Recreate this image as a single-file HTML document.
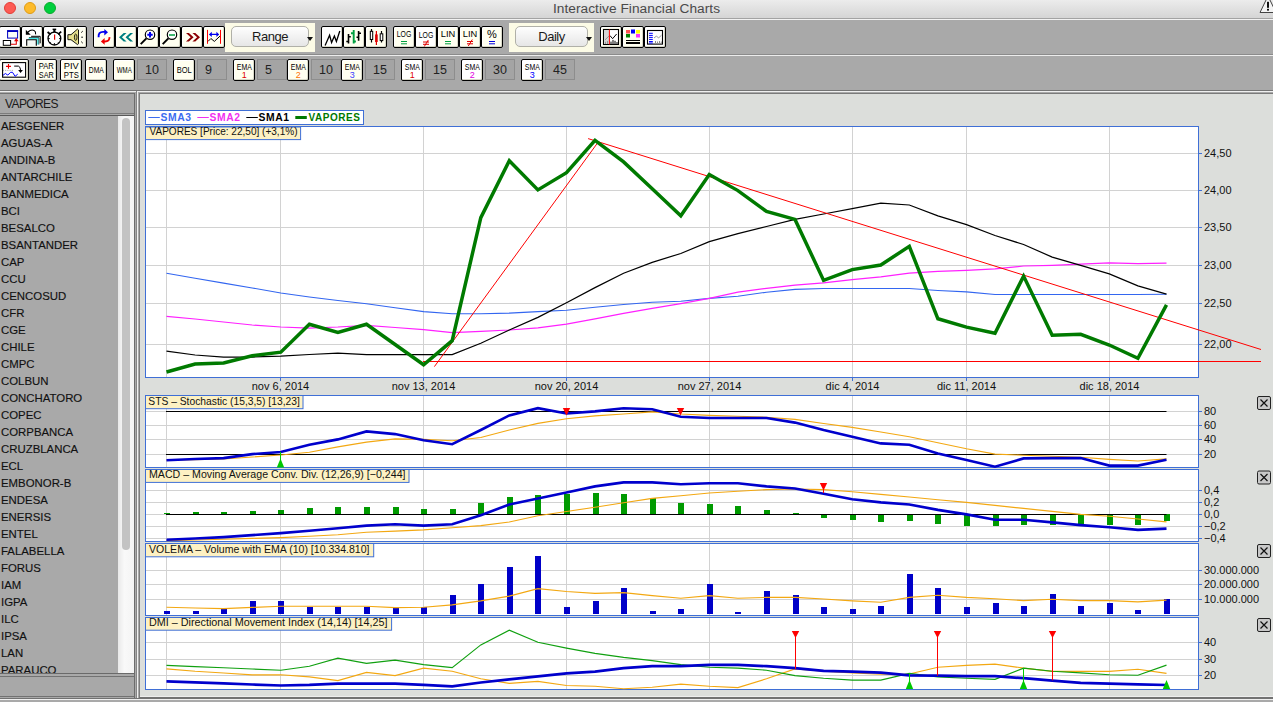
<!DOCTYPE html>
<html><head><meta charset="utf-8">
<style>
*{box-sizing:border-box}
html,body{margin:0;padding:0}
body{width:1273px;height:702px;overflow:hidden;position:relative;background:#a9a9a9;font-family:"Liberation Sans",sans-serif}
.abs{position:absolute}
#title{left:0;top:0;width:1273px;height:18px;background:linear-gradient(#ececec,#d5d5d5)}
#title .t{position:absolute;left:0;width:1273px;top:1px;text-align:center;font-size:13.7px;color:#4a4a4a;letter-spacing:0.05px}
.dot{position:absolute;top:2px;width:12px;height:12px;border-radius:50%}
.hl{position:absolute;left:0;width:1273px;height:1px}
.btn{position:absolute;top:26px;width:22px;height:22px;border:1px solid #000;border-radius:2px;background:#fffff2;box-shadow:inset 1px 1px 0 #fff, inset -1px -1px 0 #d8d8c8;overflow:hidden}
.btn svg{position:absolute;left:0;top:0}
.b2{top:59px;height:22px}
.pnl{position:absolute;top:23px;height:29px;background:#fcfbe6}
.popb{position:absolute;top:3px;height:21px;border:1px solid #b0b0a8;border-radius:5px;background:linear-gradient(#fefefe,#f2f2f2 50%,#e6e6e6);font-size:13px;letter-spacing:-0.5px;color:#1a1a1a;text-align:center;line-height:19px}
.arr{position:absolute;width:0;height:0;border-left:3.5px solid transparent;border-right:3.5px solid transparent;border-top:4px solid #111}
.fld{position:absolute;top:59px;height:21px;background:#a4a4a4;border:1px solid #8d8d8d;font-family:"Liberation Sans",sans-serif;font-size:12.5px;color:#222;text-align:left;padding-left:7px;line-height:20px}
.pix{font-family:"Liberation Mono",monospace;font-size:8.5px;line-height:8px;text-align:center;color:#000;position:absolute;left:0;width:20px}
#left{left:0;top:92px;width:135px;height:606px}
.it{position:absolute;left:1px;font-size:11.4px;color:#111;line-height:14px;white-space:nowrap;-webkit-text-stroke:0.15px #111}
#svgc{position:absolute;left:0;top:0}
.ax{font-family:"Liberation Sans",sans-serif;font-size:11px;fill:#111}
.lb{font-family:"Liberation Sans",sans-serif;font-size:11px;fill:#111}
.lg{font-family:"Liberation Sans",sans-serif;font-size:11px;font-weight:bold;letter-spacing:0.6px}
</style></head><body>
<div id="title" class="abs"><div class="t">Interactive Financial Charts</div>
<div class="dot" style="left:4px;background:#fd5b54;border:1px solid #e33e36"></div>
<div class="dot" style="left:24px;background:#fdbb2b;border:1px solid #e09c15"></div>
<div class="dot" style="left:44px;background:#00cf3d;border:1px solid #0aab2c"></div>
<svg class="abs" style="left:1255px;top:0" width="18" height="15"><path d="M5 12.5 L13 -4 L21 12.5 Z" fill="#f4f4f4" stroke="#444" stroke-width="1" stroke-linejoin="round"/><rect x="12" y="1.8" width="2" height="6" fill="#111"/><rect x="12" y="8.8" width="2" height="1.8" fill="#111"/></svg>
</div>
<div class="hl" style="top:18px;background:#a3a3a3"></div>
<div class="hl" style="top:19px;background:#f2f2f2"></div>
<!-- toolbar 1 -->
<div class="btn" style="left:-1px;top:26px;background:#fff"><svg width="20" height="20" viewBox="0 0 20 20"><rect x="7.6" y="4" width="10" height="7.1" fill="#f8fbf8" stroke="#0000c0" stroke-width="1"/><rect x="7.1" y="3.1" width="11" height="1.9" fill="#0000c0"/><rect x="3.3" y="13.5" width="7.3" height="4.8" fill="#fff" stroke="#000" stroke-width="1"/><path d="M10.8 17.3 H16.3 V13.5" fill="none" stroke="#e00000" stroke-width="1.1"/><path d="M14 14.2 L16.3 10.9 L18.6 14.2 Z" fill="#e00000"/></svg></div>
<div class="btn" style="left:21px;top:26px;background:#fff"><svg width="20" height="20" viewBox="0 0 20 20"><path d="M3.8 2.8 L3.8 7.7 L8.7 7.7 Z" fill="#000"/><path d="M6 5 Q9 2.2 12 3.4 Q14 4.6 13.6 7.4" fill="none" stroke="#000" stroke-width="1.1"/><path d="M9.1 9.3 H18.2 V16.3" fill="none" stroke="#000" stroke-width="1"/><path d="M6.6 11.4 H16 V17.6" fill="none" stroke="#40e8e8" stroke-width="1.6"/><path d="M7 10.5 H16.9 V17.6" fill="none" stroke="#000" stroke-width="0.6"/><path d="M4.7 18.7 V12.8 H14.3 V18.7" fill="#f4f8f4" stroke="#000" stroke-width="1.1"/></svg></div>
<div class="btn" style="left:43px;top:26px;background:#fff"><svg width="20" height="20" viewBox="0 0 20 20"><circle cx="10.4" cy="11.6" r="6.4" fill="#fff" stroke="#000" stroke-width="1.3"/><rect x="9.3" y="2.2" width="2.2" height="3" fill="#000"/><rect x="8.6" y="1.6" width="3.6" height="1.4" fill="#000"/><path d="M3.6 5 L6.2 7.2 M17.2 4.6 L14.6 6.9" stroke="#000" stroke-width="1.8"/><line x1="10.6" y1="7.4" x2="10.6" y2="12.7" stroke="#e00000" stroke-width="1.2"/><path d="M10.4 16 V18 M4 11.6 H5.8 M15 11.6 H16.8 M6 7.2 L6.8 8 M14.8 7.2 L14 8 M6 16 L6.8 15.2 M14.8 16 L14 15.2" stroke="#000" stroke-width="0.9"/></svg></div>
<div class="btn" style="left:65px;top:26px;background:#fffff0"><svg width="20" height="20" viewBox="0 0 20 20"><path d="M1.9 7.7 L5 7.7 L11.5 2.1 L12.5 3 L12.5 16.8 L11.5 17.6 L5 12.7 L1.9 12.7 Z" fill="#e6e08c" stroke="#000" stroke-width="0.9"/><ellipse cx="9.7" cy="10.2" rx="1.3" ry="3.2" fill="#cfc878" stroke="#000" stroke-width="0.8"/><path d="M15.2 5.6 L16.8 4.1 M15.2 10.2 H17 M15.2 14.6 L16.8 16.2" stroke="#000" stroke-width="0.9"/></svg></div>
<div class="btn" style="left:93px;top:26px;background:#fffff0"><svg width="20" height="20" viewBox="0 0 20 20"><path d="M4.6 10.2 Q4.2 4.9 9 4.9 L11 4.9" fill="none" stroke="#0000f0" stroke-width="1.9"/><path d="M10.3 1.9 L14 5.2 L10.3 8.6 Z" fill="#0000f0"/><path d="M15.4 10.2 Q15.8 14.5 11 14.5 L9.5 14.5" fill="none" stroke="#f00000" stroke-width="1.9"/><path d="M10.6 11.1 L6.9 14.4 L10.6 17.7 Z" fill="#f00000"/></svg></div>
<div class="btn" style="left:115px;top:26px;background:#fffff0"><svg width="20" height="20" viewBox="0 0 20 20"><path d="M3 10.35 L7.7 6.1 L10.6 6.1 L5.9 10.35 L10.6 14.6 L7.7 14.6 Z M9.5 10.35 L14.2 6.1 L17.1 6.1 L12.4 10.35 L17.1 14.6 L14.2 14.6 Z" fill="#008080"/></svg></div>
<div class="btn" style="left:137px;top:26px;background:#fffff0"><svg width="20" height="20" viewBox="0 0 20 20"><circle cx="12" cy="7.7" r="4.7" fill="#fff" stroke="#000" stroke-width="1.2"/><path d="M12 5 V10.6 M9.3 7.8 H14.7" stroke="#0000f0" stroke-width="2"/><line x1="8.4" y1="11.4" x2="2.7" y2="17.1" stroke="#000" stroke-width="2"/></svg></div>
<div class="btn" style="left:159px;top:26px;background:#fffff0"><svg width="20" height="20" viewBox="0 0 20 20"><circle cx="12" cy="7.7" r="4.7" fill="#fff" stroke="#000" stroke-width="1.2"/><path d="M9 8 H15" stroke="#00a040" stroke-width="1.7"/><line x1="8.4" y1="11.4" x2="2.7" y2="17.1" stroke="#000" stroke-width="2"/></svg></div>
<div class="btn" style="left:181px;top:26px;background:#fffff0"><svg width="20" height="20" viewBox="0 0 20 20"><path d="M4 6.1 L6.9 6.1 L11.6 10.35 L6.9 14.6 L4 14.6 L8.7 10.35 Z M10.4 6.1 L13.3 6.1 L18 10.35 L13.3 14.6 L10.4 14.6 L15.1 10.35 Z" fill="#8b0000"/></svg></div>
<div class="btn" style="left:203px;top:26px;background:#fffff0"><svg width="20" height="20" viewBox="0 0 20 20"><path d="M3.5 2.9 V16.8 M16.5 2.9 V16.8" stroke="#f00" stroke-width="1"/><path d="M7 7.4 H13.2" stroke="#0000f0" stroke-width="1.2"/><path d="M4.9 7.4 L7.8 4.8 V10 Z M15.2 7.4 L12.4 4.8 V10 Z" fill="#0000f0"/><path d="M4 14.4 L6.9 11.5 L10.35 14.4 L16 9.1" fill="none" stroke="#000" stroke-width="1"/></svg></div>
<div class="btn" style="left:321px;top:26px;background:#fff"><svg width="20" height="20" viewBox="0 0 20 20"><path d="M3.1 18.5 L7.6 8.3 L9.6 15.6 L12.4 9.1 L14.4 14.5 L17.8 4" fill="none" stroke="#000" stroke-width="1.3"/></svg></div>
<div class="btn" style="left:343px;top:26px;background:#fffff0"><svg width="20" height="20" viewBox="0 0 20 20"><path d="M4.5 7 V16.5 M2.3 14.5 H4.5 M4.5 9.7 H6.8 M14.6 4 V13.7 M12.5 10.3 H14.6 M14.6 6.3 H17" stroke="#000" stroke-width="1.6"/><path d="M9.7 3 V16.5 M7 6.3 H9.7 M9.7 14.5 H11.9" stroke="#00a040" stroke-width="1.9"/></svg></div>
<div class="btn" style="left:365px;top:26px;background:#fffff0"><svg width="20" height="20" viewBox="0 0 20 20"><path d="M5.5 2 V15.6 M15.5 4 V15.6" stroke="#000" stroke-width="1.2"/><rect x="4.3" y="4.3" width="2.4" height="8.2" fill="#fff" stroke="#000" stroke-width="1"/><path d="M10.4 4 V18" stroke="#e00000" stroke-width="1.2"/><rect x="9.1" y="7.4" width="2.6" height="7.6" fill="#e00000"/><rect x="14.2" y="6.8" width="2.6" height="6.8" fill="#fff" stroke="#000" stroke-width="1"/></svg></div>
<div class="btn" style="left:393px;top:26px;background:#fffff0"><svg width="20" height="20" viewBox="0 0 20 20"><text x="10" y="10" text-anchor="middle" font-family="Liberation Sans" font-size="9" fill="#000" textLength="14.5" lengthAdjust="spacingAndGlyphs">LOG</text><path d="M7 14.5 H13 M7 16.8 H13" stroke="#00a040" stroke-width="1"/></svg></div>
<div class="btn" style="left:415px;top:26px;background:#fff"><svg width="20" height="20" viewBox="0 0 20 20"><text x="10" y="11" text-anchor="middle" font-family="Liberation Sans" font-size="9" fill="#000" textLength="14.5" lengthAdjust="spacingAndGlyphs">LOG</text><path d="M7 15 H13 M7 17.3 H13 M12.3 13 L8.3 19.5" stroke="#e00000" stroke-width="1"/></svg></div>
<div class="btn" style="left:437px;top:26px;background:#fffff0"><svg width="20" height="20" viewBox="0 0 20 20"><text x="10" y="10" text-anchor="middle" font-family="Liberation Sans" font-size="9" fill="#000" textLength="14.5" lengthAdjust="spacingAndGlyphs">LIN</text><path d="M7 14.5 H13 M7 16.8 H13" stroke="#00a040" stroke-width="1"/></svg></div>
<div class="btn" style="left:459px;top:26px;background:#fffff0"><svg width="20" height="20" viewBox="0 0 20 20"><text x="10" y="10" text-anchor="middle" font-family="Liberation Sans" font-size="9" fill="#000" textLength="14.5" lengthAdjust="spacingAndGlyphs">LIN</text><path d="M7 14.5 H13 M7 16.8 H13 M12.3 12.5 L8.3 19" stroke="#e00000" stroke-width="1"/></svg></div>
<div class="btn" style="left:481px;top:26px;background:#fffff0"><svg width="20" height="20" viewBox="0 0 20 20"><text x="10" y="11" text-anchor="middle" font-family="Liberation Sans" font-size="11" fill="#000">%</text><path d="M7 14.5 H13 M7 16.8 H13" stroke="#0000e0" stroke-width="1"/></svg></div>
<div class="btn" style="left:600px;top:26px;background:#fffff0"><svg width="20" height="20" viewBox="0 0 20 20"><rect x="2.5" y="2.5" width="15" height="15" fill="#fff" stroke="#000" stroke-width="1.1"/><rect x="3" y="3" width="5.2" height="14" fill="#d4d4d4"/><path d="M4 12.9 L8 9" fill="none" stroke="#909090" stroke-width="0.9"/><path d="M8.9 8.5 L11.6 11.7 L15.6 7" fill="none" stroke="#000" stroke-width="1"/><path d="M4.5 17 V14.8 M6.5 17 V14" stroke="#909090" stroke-width="0.9"/><path d="M10 17 V14.6 M12 17 V12.9 M14 17 V13.8 M16 17 V15" stroke="#000" stroke-width="1"/><line x1="8.4" y1="2.5" x2="8.4" y2="17.5" stroke="#f00" stroke-width="1"/></svg></div>
<div class="btn" style="left:622px;top:26px;background:#fffff0"><svg width="20" height="20" viewBox="0 0 20 20"><rect x="3" y="3" width="4" height="3.5" fill="#ff5050"/><rect x="8" y="2.5" width="4" height="4" fill="#0000ff"/><rect x="13" y="3" width="4" height="3.5" fill="#ffff00"/><rect x="3" y="7" width="4" height="3.5" fill="#008000"/><rect x="13" y="7" width="4" height="3.5" fill="#ff30ff"/><path d="M3 13.5 H17" stroke="#000" stroke-width="1"/><path d="M3 16 H17" stroke="#000" stroke-width="1.8"/></svg></div>
<div class="btn" style="left:644px;top:26px;background:#fff"><svg width="20" height="20" viewBox="0 0 20 20"><rect x="2.5" y="3.5" width="15" height="13.6" fill="#fff" stroke="#000" stroke-width="1.1"/><path d="M4 6.3 H7.8 M4 8.4 H7.8 M4 10.4 H7.8 M4 12.4 H7.8 M4 14.5 H7.8 M4 16 H7.8" stroke="#0000ff" stroke-width="1"/><path d="M9 11 L11.5 9 L13.5 11 L16.5 8.2" fill="none" stroke="#808080" stroke-width="0.8"/><path d="M10.5 16 V14 M12.5 16 V14.5 M14.5 16 V14 M16.3 16 V14.5" stroke="#808080" stroke-width="0.9"/></svg></div>
<div class="pnl" style="left:225px;width:90px"><div class="popb" style="left:6px;width:78px">Range</div><div class="arr" style="left:82px;top:14px"></div></div>
<div class="pnl" style="left:509px;width:85px"><div class="popb" style="left:6px;width:73px">Daily</div><div class="arr" style="left:77px;top:14px"></div></div>
<div class="hl" style="top:54px;background:#8b8b8b"></div>
<div class="hl" style="top:55px;background:#ececec"></div>
<!-- toolbar 2 -->
<div class="btn" style="left:-1px;top:59px;width:30px;background:#fffff0"><svg width="28" height="20" viewBox="0 0 28 20"><rect x="2.6" y="2.6" width="23" height="14.6" fill="#fff" stroke="#000" stroke-width="1.1"/><path d="M8.5 4 V8.8 M6 6.4 H11" stroke="#f00000" stroke-width="1.1"/><path d="M3 10.4 H14" stroke="#999" stroke-width="0.9" stroke-dasharray="1 1.2"/><path d="M3 15.3 L5.4 13.5 L7.8 15.1 L10.6 12.3 L12.5 12.3 L15.1 16.3 L17.7 14.2" fill="none" stroke="#0000ff" stroke-width="1"/><path d="M14.2 6.1 H18.4 Q20.5 6.8 20.5 10" fill="none" stroke="#000" stroke-width="1"/><path d="M18.2 9.9 L22.9 9.9 L20.5 12.9 Z" fill="#000"/></svg></div>
<div class="btn" style="left:35px;top:59px;width:22px;background:#fffff0"><svg width="20" height="20" viewBox="0 0 20 20"><text x="10.3" y="9.2" text-anchor="middle" font-family="Liberation Sans" font-size="9" fill="#000" textLength="15" lengthAdjust="spacingAndGlyphs">PAR</text><text x="10.3" y="17.6" text-anchor="middle" font-family="Liberation Sans" font-size="9" fill="#000" textLength="15" lengthAdjust="spacingAndGlyphs">SAR</text></svg></div>
<div class="btn" style="left:60px;top:59px;width:22px;background:#fffff0"><svg width="20" height="20" viewBox="0 0 20 20"><text x="10.3" y="9.2" text-anchor="middle" font-family="Liberation Sans" font-size="9" fill="#000" textLength="15" lengthAdjust="spacingAndGlyphs">PIV</text><text x="10.3" y="17.6" text-anchor="middle" font-family="Liberation Sans" font-size="9" fill="#000" textLength="15" lengthAdjust="spacingAndGlyphs">PTS</text></svg></div>
<div class="btn" style="left:85px;top:59px;width:22px;background:#fffff0"><svg width="20" height="20" viewBox="0 0 20 20"><text x="10.3" y="13" text-anchor="middle" font-family="Liberation Sans" font-size="9" fill="#000" textLength="15" lengthAdjust="spacingAndGlyphs">DMA</text></svg></div>
<div class="btn" style="left:113px;top:59px;width:22px;background:#fffff0"><svg width="20" height="20" viewBox="0 0 20 20"><text x="10.3" y="13" text-anchor="middle" font-family="Liberation Sans" font-size="9" fill="#000" textLength="15" lengthAdjust="spacingAndGlyphs">WMA</text></svg></div>
<div class="fld" style="left:137px;width:30px">10</div>
<div class="btn" style="left:173px;top:59px;width:22px;background:#fffff0"><svg width="20" height="20" viewBox="0 0 20 20"><text x="10.3" y="13" text-anchor="middle" font-family="Liberation Sans" font-size="9" fill="#000" textLength="15" lengthAdjust="spacingAndGlyphs">BOL</text></svg></div>
<div class="fld" style="left:197px;width:30px">9</div>
<div class="btn" style="left:233px;top:59px;width:22px;background:#fffff0"><svg width="20" height="20" viewBox="0 0 20 20"><text x="10.3" y="10.2" text-anchor="middle" font-family="Liberation Sans" font-size="9" fill="#000" textLength="15" lengthAdjust="spacingAndGlyphs">EMA</text><text x="10.3" y="18.4" text-anchor="middle" font-family="Liberation Sans" font-size="9" fill="#e00000" >1</text></svg></div>
<div class="fld" style="left:257px;width:30px">5</div>
<div class="btn" style="left:287px;top:59px;width:22px;background:#fffff0"><svg width="20" height="20" viewBox="0 0 20 20"><text x="10.3" y="10.2" text-anchor="middle" font-family="Liberation Sans" font-size="9" fill="#000" textLength="15" lengthAdjust="spacingAndGlyphs">EMA</text><text x="10.3" y="18.4" text-anchor="middle" font-family="Liberation Sans" font-size="9" fill="#ff7000" >2</text></svg></div>
<div class="fld" style="left:311px;width:30px">10</div>
<div class="btn" style="left:341px;top:59px;width:22px;background:#fffff0"><svg width="20" height="20" viewBox="0 0 20 20"><text x="10.3" y="10.2" text-anchor="middle" font-family="Liberation Sans" font-size="9" fill="#000" textLength="15" lengthAdjust="spacingAndGlyphs">EMA</text><text x="10.3" y="18.4" text-anchor="middle" font-family="Liberation Sans" font-size="9" fill="#4040ff" >3</text></svg></div>
<div class="fld" style="left:365px;width:30px">15</div>
<div class="btn" style="left:401px;top:59px;width:22px;background:#fff"><svg width="20" height="20" viewBox="0 0 20 20"><text x="10.3" y="10.2" text-anchor="middle" font-family="Liberation Sans" font-size="9" fill="#000" textLength="15" lengthAdjust="spacingAndGlyphs">SMA</text><text x="10.3" y="18.4" text-anchor="middle" font-family="Liberation Sans" font-size="9" fill="#e00000" >1</text></svg></div>
<div class="fld" style="left:425px;width:30px">15</div>
<div class="btn" style="left:461px;top:59px;width:22px;background:#fff"><svg width="20" height="20" viewBox="0 0 20 20"><text x="10.3" y="10.2" text-anchor="middle" font-family="Liberation Sans" font-size="9" fill="#000" textLength="15" lengthAdjust="spacingAndGlyphs">SMA</text><text x="10.3" y="18.4" text-anchor="middle" font-family="Liberation Sans" font-size="9" fill="#e000e0" >2</text></svg></div>
<div class="fld" style="left:485px;width:30px">30</div>
<div class="btn" style="left:521px;top:59px;width:22px;background:#fff"><svg width="20" height="20" viewBox="0 0 20 20"><text x="10.3" y="10.2" text-anchor="middle" font-family="Liberation Sans" font-size="9" fill="#000" textLength="15" lengthAdjust="spacingAndGlyphs">SMA</text><text x="10.3" y="18.4" text-anchor="middle" font-family="Liberation Sans" font-size="9" fill="#0000ff" >3</text></svg></div>
<div class="fld" style="left:545px;width:30px">45</div>
<div class="hl" style="top:90px;background:#747474"></div>
<div class="hl" style="top:91px;background:#efefef"></div><div class="abs" style="left:136px;top:91px;width:1px;height:1px;background:#858585"></div>
<!-- left panel -->
<div class="abs" style="left:0;top:93px;width:135px;height:1px;background:#727272"></div>
<div class="abs" style="left:0;top:94px;width:134px;height:19px;background:#a8a8a8;font-size:12px;letter-spacing:-0.6px;color:#1a1a1a;line-height:21px;padding-left:5px">VAPORES</div>
<div class="abs" style="left:0;top:113px;width:135px;height:1px;background:#7c7c7c"></div>
<div class="abs" style="left:0;top:115px;width:135px;height:1px;background:#5a5a5a"></div>
<div class="abs" style="left:0;top:116px;width:134px;height:557px;background:#a9a9a9;overflow:hidden"><div class="it" style="top:3px">AESGENER</div><div class="it" style="top:20px">AGUAS-A</div><div class="it" style="top:37px">ANDINA-B</div><div class="it" style="top:54px">ANTARCHILE</div><div class="it" style="top:71px">BANMEDICA</div><div class="it" style="top:88px">BCI</div><div class="it" style="top:105px">BESALCO</div><div class="it" style="top:122px">BSANTANDER</div><div class="it" style="top:139px">CAP</div><div class="it" style="top:156px">CCU</div><div class="it" style="top:173px">CENCOSUD</div><div class="it" style="top:190px">CFR</div><div class="it" style="top:207px">CGE</div><div class="it" style="top:224px">CHILE</div><div class="it" style="top:241px">CMPC</div><div class="it" style="top:258px">COLBUN</div><div class="it" style="top:275px">CONCHATORO</div><div class="it" style="top:292px">COPEC</div><div class="it" style="top:309px">CORPBANCA</div><div class="it" style="top:326px">CRUZBLANCA</div><div class="it" style="top:343px">ECL</div><div class="it" style="top:360px">EMBONOR-B</div><div class="it" style="top:377px">ENDESA</div><div class="it" style="top:394px">ENERSIS</div><div class="it" style="top:411px">ENTEL</div><div class="it" style="top:428px">FALABELLA</div><div class="it" style="top:445px">FORUS</div><div class="it" style="top:462px">IAM</div><div class="it" style="top:479px">IGPA</div><div class="it" style="top:496px">ILC</div><div class="it" style="top:513px">IPSA</div><div class="it" style="top:530px">LAN</div><div class="it" style="top:547px">PARAUCO</div>
<div class="abs" style="left:118px;top:0;width:16px;height:557px;background:linear-gradient(90deg,#e9e9e9,#f9f9f9 40%,#f4f4f4)"></div>
<div class="abs" style="left:122px;top:2px;width:8px;height:432px;border-radius:4px;background:#c3c3c3"></div>
</div>
<div class="abs" style="left:134px;top:93px;width:1px;height:605px;background:#6c6c6c"></div>
<div class="abs" style="left:0;top:673px;width:135px;height:1px;background:#6a6a6a"></div>
<div class="abs" style="left:0;top:676px;width:134px;height:21px;background:#a8a8a8;border-top:1px solid #727272;border-bottom:1px solid #727272"></div>
<div class="abs" style="left:136px;top:91px;width:1px;height:607px;background:#858585"></div>
<div class="abs" style="left:137px;top:91px;width:1px;height:607px;background:#f0f0f0"></div>
<div class="abs" style="left:139px;top:93px;width:1px;height:605px;background:#7d7d7d"></div>
<!-- chart area -->
<div class="abs" style="left:139px;top:93px;width:1134px;height:1px;background:#7a7a7a"></div>
<div class="abs" style="left:140px;top:94px;width:1133px;height:602px;background:#dcdedb"></div><div class="abs" style="left:140px;top:696px;width:1133px;height:1px;background:#eeeeee"></div>
<div class="abs" style="left:139px;top:697px;width:1134px;height:2px;background:#727272"></div><div class="abs" style="left:0;top:698px;width:139px;height:1px;background:#727272"></div>
<div class="abs" style="left:0;top:699px;width:1273px;height:1px;background:#efefef"></div>
<div class="abs" style="left:0;top:700px;width:1273px;height:2px;background:#a9a9a9"></div>
<svg id="svgc" width="1273" height="702" viewBox="0 0 1273 702">
<rect x="145.5" y="126.5" width="1053" height="251.0" fill="#fff" stroke="#3f6fd6" stroke-width="1"/>
<rect x="145.5" y="395.5" width="1053" height="72.0" fill="#fff" stroke="#3f6fd6" stroke-width="1"/>
<rect x="145.5" y="469.5" width="1053" height="72.0" fill="#fff" stroke="#3f6fd6" stroke-width="1"/>
<rect x="145.5" y="543.5" width="1053" height="72.0" fill="#fff" stroke="#3f6fd6" stroke-width="1"/>
<rect x="145.5" y="617.5" width="1053" height="72.0" fill="#fff" stroke="#3f6fd6" stroke-width="1"/>
<line x1="166.5" y1="127.0" x2="166.5" y2="377.0" stroke="#d2d2d2"/>
<line x1="280.5" y1="127.0" x2="280.5" y2="377.0" stroke="#d2d2d2"/>
<line x1="423.5" y1="127.0" x2="423.5" y2="377.0" stroke="#d2d2d2"/>
<line x1="566.5" y1="127.0" x2="566.5" y2="377.0" stroke="#d2d2d2"/>
<line x1="709.5" y1="127.0" x2="709.5" y2="377.0" stroke="#d2d2d2"/>
<line x1="852.5" y1="127.0" x2="852.5" y2="377.0" stroke="#d2d2d2"/>
<line x1="966.5" y1="127.0" x2="966.5" y2="377.0" stroke="#d2d2d2"/>
<line x1="1109.5" y1="127.0" x2="1109.5" y2="377.0" stroke="#d2d2d2"/>
<line x1="166.5" y1="396.0" x2="166.5" y2="467.0" stroke="#d2d2d2"/>
<line x1="280.5" y1="396.0" x2="280.5" y2="467.0" stroke="#d2d2d2"/>
<line x1="423.5" y1="396.0" x2="423.5" y2="467.0" stroke="#d2d2d2"/>
<line x1="566.5" y1="396.0" x2="566.5" y2="467.0" stroke="#d2d2d2"/>
<line x1="709.5" y1="396.0" x2="709.5" y2="467.0" stroke="#d2d2d2"/>
<line x1="852.5" y1="396.0" x2="852.5" y2="467.0" stroke="#d2d2d2"/>
<line x1="966.5" y1="396.0" x2="966.5" y2="467.0" stroke="#d2d2d2"/>
<line x1="1109.5" y1="396.0" x2="1109.5" y2="467.0" stroke="#d2d2d2"/>
<line x1="166.5" y1="470.0" x2="166.5" y2="541.0" stroke="#d2d2d2"/>
<line x1="280.5" y1="470.0" x2="280.5" y2="541.0" stroke="#d2d2d2"/>
<line x1="423.5" y1="470.0" x2="423.5" y2="541.0" stroke="#d2d2d2"/>
<line x1="566.5" y1="470.0" x2="566.5" y2="541.0" stroke="#d2d2d2"/>
<line x1="709.5" y1="470.0" x2="709.5" y2="541.0" stroke="#d2d2d2"/>
<line x1="852.5" y1="470.0" x2="852.5" y2="541.0" stroke="#d2d2d2"/>
<line x1="966.5" y1="470.0" x2="966.5" y2="541.0" stroke="#d2d2d2"/>
<line x1="1109.5" y1="470.0" x2="1109.5" y2="541.0" stroke="#d2d2d2"/>
<line x1="166.5" y1="544.0" x2="166.5" y2="615.0" stroke="#d2d2d2"/>
<line x1="280.5" y1="544.0" x2="280.5" y2="615.0" stroke="#d2d2d2"/>
<line x1="423.5" y1="544.0" x2="423.5" y2="615.0" stroke="#d2d2d2"/>
<line x1="566.5" y1="544.0" x2="566.5" y2="615.0" stroke="#d2d2d2"/>
<line x1="709.5" y1="544.0" x2="709.5" y2="615.0" stroke="#d2d2d2"/>
<line x1="852.5" y1="544.0" x2="852.5" y2="615.0" stroke="#d2d2d2"/>
<line x1="966.5" y1="544.0" x2="966.5" y2="615.0" stroke="#d2d2d2"/>
<line x1="1109.5" y1="544.0" x2="1109.5" y2="615.0" stroke="#d2d2d2"/>
<line x1="166.5" y1="618.0" x2="166.5" y2="689.0" stroke="#d2d2d2"/>
<line x1="280.5" y1="618.0" x2="280.5" y2="689.0" stroke="#d2d2d2"/>
<line x1="423.5" y1="618.0" x2="423.5" y2="689.0" stroke="#d2d2d2"/>
<line x1="566.5" y1="618.0" x2="566.5" y2="689.0" stroke="#d2d2d2"/>
<line x1="709.5" y1="618.0" x2="709.5" y2="689.0" stroke="#d2d2d2"/>
<line x1="852.5" y1="618.0" x2="852.5" y2="689.0" stroke="#d2d2d2"/>
<line x1="966.5" y1="618.0" x2="966.5" y2="689.0" stroke="#d2d2d2"/>
<line x1="1109.5" y1="618.0" x2="1109.5" y2="689.0" stroke="#d2d2d2"/>
<line x1="146" y1="153.5" x2="1198" y2="153.5" stroke="#d2d2d2"/>
<line x1="146" y1="190.5" x2="1198" y2="190.5" stroke="#d2d2d2"/>
<line x1="146" y1="227.5" x2="1198" y2="227.5" stroke="#d2d2d2"/>
<line x1="146" y1="265.5" x2="1198" y2="265.5" stroke="#d2d2d2"/>
<line x1="146" y1="303.5" x2="1198" y2="303.5" stroke="#d2d2d2"/>
<line x1="146" y1="344.5" x2="1198" y2="344.5" stroke="#d2d2d2"/>
<line x1="146" y1="411.5" x2="1198" y2="411.5" stroke="#d2d2d2"/>
<line x1="146" y1="425.5" x2="1198" y2="425.5" stroke="#d2d2d2"/>
<line x1="146" y1="439.5" x2="1198" y2="439.5" stroke="#d2d2d2"/>
<line x1="146" y1="454.5" x2="1198" y2="454.5" stroke="#d2d2d2"/>
<line x1="146" y1="490.5" x2="1198" y2="490.5" stroke="#d2d2d2"/>
<line x1="146" y1="502.5" x2="1198" y2="502.5" stroke="#d2d2d2"/>
<line x1="146" y1="514.5" x2="1198" y2="514.5" stroke="#d2d2d2"/>
<line x1="146" y1="526.5" x2="1198" y2="526.5" stroke="#d2d2d2"/>
<line x1="146" y1="538.5" x2="1198" y2="538.5" stroke="#d2d2d2"/>
<line x1="146" y1="570.5" x2="1198" y2="570.5" stroke="#d2d2d2"/>
<line x1="146" y1="584.5" x2="1198" y2="584.5" stroke="#d2d2d2"/>
<line x1="146" y1="599.5" x2="1198" y2="599.5" stroke="#d2d2d2"/>
<line x1="146" y1="642.5" x2="1198" y2="642.5" stroke="#d2d2d2"/>
<line x1="146" y1="659.5" x2="1198" y2="659.5" stroke="#d2d2d2"/>
<line x1="146" y1="675.5" x2="1198" y2="675.5" stroke="#d2d2d2"/>
<line x1="1198" y1="153.5" x2="1202" y2="153.5" stroke="#3f6fd6" stroke-width="1"/>
<text x="1204" y="156.5" class="ax">24,50</text>
<line x1="1198" y1="190.5" x2="1202" y2="190.5" stroke="#3f6fd6" stroke-width="1"/>
<text x="1204" y="193.5" class="ax">24,00</text>
<line x1="1198" y1="227.5" x2="1202" y2="227.5" stroke="#3f6fd6" stroke-width="1"/>
<text x="1204" y="230.5" class="ax">23,50</text>
<line x1="1198" y1="265.5" x2="1202" y2="265.5" stroke="#3f6fd6" stroke-width="1"/>
<text x="1204" y="268.5" class="ax">23,00</text>
<line x1="1198" y1="303.5" x2="1202" y2="303.5" stroke="#3f6fd6" stroke-width="1"/>
<text x="1204" y="306.5" class="ax">22,50</text>
<line x1="1198" y1="344.5" x2="1202" y2="344.5" stroke="#3f6fd6" stroke-width="1"/>
<text x="1204" y="347.5" class="ax">22,00</text>
<line x1="1198" y1="411.5" x2="1202" y2="411.5" stroke="#3f6fd6" stroke-width="1"/>
<text x="1204" y="414.5" class="ax">80</text>
<line x1="1198" y1="425.5" x2="1202" y2="425.5" stroke="#3f6fd6" stroke-width="1"/>
<text x="1204" y="428.5" class="ax">60</text>
<line x1="1198" y1="439.5" x2="1202" y2="439.5" stroke="#3f6fd6" stroke-width="1"/>
<text x="1204" y="442.5" class="ax">40</text>
<line x1="1198" y1="454.5" x2="1202" y2="454.5" stroke="#3f6fd6" stroke-width="1"/>
<text x="1204" y="457.5" class="ax">20</text>
<line x1="1198" y1="490.5" x2="1202" y2="490.5" stroke="#3f6fd6" stroke-width="1"/>
<text x="1204" y="493.5" class="ax">0,4</text>
<line x1="1198" y1="502.5" x2="1202" y2="502.5" stroke="#3f6fd6" stroke-width="1"/>
<text x="1204" y="505.5" class="ax">0,2</text>
<line x1="1198" y1="514.5" x2="1202" y2="514.5" stroke="#3f6fd6" stroke-width="1"/>
<text x="1204" y="517.5" class="ax">0,0</text>
<line x1="1198" y1="526.5" x2="1202" y2="526.5" stroke="#3f6fd6" stroke-width="1"/>
<text x="1204" y="529.5" class="ax">−0,2</text>
<line x1="1198" y1="538.5" x2="1202" y2="538.5" stroke="#3f6fd6" stroke-width="1"/>
<text x="1204" y="541.5" class="ax">−0,4</text>
<line x1="1198" y1="570.5" x2="1202" y2="570.5" stroke="#3f6fd6" stroke-width="1"/>
<text x="1204" y="573.5" class="ax">30.000.000</text>
<line x1="1198" y1="584.5" x2="1202" y2="584.5" stroke="#3f6fd6" stroke-width="1"/>
<text x="1204" y="587.5" class="ax">20.000.000</text>
<line x1="1198" y1="599.5" x2="1202" y2="599.5" stroke="#3f6fd6" stroke-width="1"/>
<text x="1204" y="602.5" class="ax">10.000.000</text>
<line x1="1198" y1="642.5" x2="1202" y2="642.5" stroke="#3f6fd6" stroke-width="1"/>
<text x="1204" y="645.5" class="ax">40</text>
<line x1="1198" y1="659.5" x2="1202" y2="659.5" stroke="#3f6fd6" stroke-width="1"/>
<text x="1204" y="662.5" class="ax">30</text>
<line x1="1198" y1="675.5" x2="1202" y2="675.5" stroke="#3f6fd6" stroke-width="1"/>
<text x="1204" y="678.5" class="ax">20</text>
<line x1="423" y1="361.5" x2="1261" y2="361.5" stroke="#f00" stroke-width="1"/>
<polyline points="166.5,273.2 195.1,278.2 223.6,283.1 252.2,288.0 280.8,293.0 309.4,297.0 337.9,300.5 366.5,303.7 395.1,307.7 423.6,311.6 452.2,313.8 480.8,313.8 509.3,313.1 537.9,311.6 566.5,310.2 595.0,307.3 623.6,304.5 652.2,302.3 680.8,301.2 709.3,298.4 737.9,296.2 766.5,292.2 795.0,289.4 823.6,288.5 852.2,288.5 880.8,288.5 909.3,288.5 937.9,290.5 966.5,291.9 995.0,294.5 1023.6,294.5 1052.2,294.5 1080.7,294.5 1109.3,294.5 1137.9,294.5 1166.5,294.3" fill="none" stroke="#3366f0" stroke-width="1.1" stroke-linejoin="miter" />
<polyline points="166.5,316.3 195.1,319.0 223.6,322.0 252.2,325.0 280.8,327.0 309.4,328.0 337.9,327.0 366.5,325.3 395.1,327.5 423.6,329.6 452.2,332.5 480.8,331.4 509.3,330.0 537.9,327.8 566.5,324.2 595.0,318.8 623.6,313.4 652.2,308.4 680.8,303.7 709.3,298.4 737.9,292.2 766.5,288.3 795.0,285.1 823.6,282.9 852.2,279.7 880.8,276.8 909.3,273.2 937.9,271.4 966.5,270.3 995.0,268.9 1023.6,266.0 1052.2,265.3 1080.7,264.2 1109.3,262.8 1137.9,263.5 1166.5,263.2" fill="none" stroke="#ff20ff" stroke-width="1.25" stroke-linejoin="miter" />
<polyline points="166.5,351.1 195.1,355.0 223.6,357.2 252.2,357.0 280.8,356.2 309.4,354.5 337.9,353.2 366.5,354.5 395.1,354.5 423.6,354.5 452.2,354.5 480.8,343.3 509.3,330.0 537.9,317.4 566.5,302.7 595.0,287.6 623.6,273.2 652.2,262.4 680.8,253.5 709.3,241.6 737.9,233.7 766.5,226.5 795.0,219.4 823.6,214.0 852.2,208.6 880.8,203.2 909.3,205.0 937.9,215.8 966.5,224.7 995.0,235.5 1023.6,244.5 1052.2,257.1 1080.7,265.3 1109.3,273.9 1137.9,285.8 1166.5,294.2" fill="none" stroke="#000" stroke-width="1.25" stroke-linejoin="miter" />
<line x1="434.4" y1="366.6" x2="598.9" y2="141.1" stroke="#f00" stroke-width="1"/>
<line x1="588.1" y1="138.6" x2="1261" y2="349.5" stroke="#f00" stroke-width="1"/>
<polyline points="166.5,372.0 195.1,364.1 223.6,363.0 252.2,355.8 280.8,352.2 309.4,324.2 337.9,332.5 366.5,324.2 395.1,344.5 423.6,364.8 452.2,340.7 480.8,217.6 509.3,160.8 537.9,189.9 566.5,172.7 595.0,140.4 623.6,161.9 652.2,188.8 680.8,215.8 709.3,174.5 737.9,190.6 766.5,211.5 795.0,219.4 823.6,280.4 852.2,269.6 880.8,265.0 909.3,246.3 937.9,318.8 966.5,327.1 995.0,333.2 1023.6,276.1 1052.2,335.3 1080.7,334.3 1109.3,345.0 1137.9,358.3 1166.5,304.8" fill="none" stroke="#007a00" stroke-width="3.5" stroke-linejoin="miter" />
<line x1="280.5" y1="377.5" x2="280.5" y2="381" stroke="#3f6fd6"/>
<text x="280.5" y="390" class="ax" text-anchor="middle">nov 6, 2014</text>
<line x1="423.5" y1="377.5" x2="423.5" y2="381" stroke="#3f6fd6"/>
<text x="423.5" y="390" class="ax" text-anchor="middle">nov 13, 2014</text>
<line x1="566.5" y1="377.5" x2="566.5" y2="381" stroke="#3f6fd6"/>
<text x="566.5" y="390" class="ax" text-anchor="middle">nov 20, 2014</text>
<line x1="709.5" y1="377.5" x2="709.5" y2="381" stroke="#3f6fd6"/>
<text x="709.5" y="390" class="ax" text-anchor="middle">nov 27, 2014</text>
<line x1="852.5" y1="377.5" x2="852.5" y2="381" stroke="#3f6fd6"/>
<text x="852.5" y="390" class="ax" text-anchor="middle">dic 4, 2014</text>
<line x1="966.5" y1="377.5" x2="966.5" y2="381" stroke="#3f6fd6"/>
<text x="966.5" y="390" class="ax" text-anchor="middle">dic 11, 2014</text>
<line x1="1109.5" y1="377.5" x2="1109.5" y2="381" stroke="#3f6fd6"/>
<text x="1109.5" y="390" class="ax" text-anchor="middle">dic 18, 2014</text>
<line x1="166" y1="411.5" x2="1166.5" y2="411.5" stroke="#000"/>
<line x1="166" y1="454.5" x2="1166.5" y2="454.5" stroke="#000"/>
<polyline points="166.5,460.2 195.1,459.6 223.6,459.0 252.2,457.0 280.8,455.0 309.4,452.2 337.9,446.9 366.5,442.1 395.1,438.9 423.6,439.4 452.2,440.7 480.8,437.5 509.3,430.0 537.9,423.4 566.5,418.8 595.0,415.9 623.6,414.0 652.2,411.9 680.8,414.0 709.3,415.4 737.9,416.2 766.5,417.2 795.0,419.4 823.6,423.5 852.2,427.4 880.8,432.0 909.3,436.7 937.9,442.7 966.5,448.8 995.0,454.1 1023.6,455.2 1052.2,456.2 1080.7,457.3 1109.3,459.4 1137.9,461.0 1166.5,458.9" fill="none" stroke="#f3a812" stroke-width="1.15" stroke-linejoin="miter" />
<polyline points="166.5,460.2 195.1,459.0 223.6,458.1 252.2,454.1 280.8,452.0 309.4,444.8 337.9,439.4 366.5,431.4 395.1,434.1 423.6,440.2 452.2,444.2 480.8,430.0 509.3,415.4 537.9,408.2 566.5,413.5 595.0,411.4 623.6,408.2 652.2,409.2 680.8,416.7 709.3,418.0 737.9,418.0 766.5,418.0 795.0,422.6 823.6,430.0 852.2,436.7 880.8,443.4 909.3,444.8 937.9,453.6 966.5,460.0 995.0,466.7 1023.6,458.4 1052.2,458.1 1080.7,458.1 1109.3,465.6 1137.9,465.6 1166.5,459.7" fill="none" stroke="#0000cc" stroke-width="2.6" stroke-linejoin="miter" />
<line x1="280.5" y1="452" x2="280.5" y2="467" stroke="#0c0"/>
<polygon points="276.8,467.5 284.2,467.5 280.5,458.5" fill="#00c800"/>
<polygon points="562.8,408.0 570.2,408.0 566.5,415.5" fill="#f00"/>
<polygon points="676.8,408.0 684.2,408.0 680.5,415.5" fill="#f00"/>
<rect x="164.0" y="513.0" width="6" height="1.0" fill="#009a00"/>
<rect x="193.0" y="512.0" width="6" height="2.0" fill="#009a00"/>
<rect x="221.0" y="512.0" width="6" height="2.0" fill="#009a00"/>
<rect x="250.0" y="511.0" width="6" height="3.0" fill="#009a00"/>
<rect x="278.0" y="510.0" width="6" height="4.0" fill="#009a00"/>
<rect x="307.0" y="508.0" width="6" height="6.0" fill="#009a00"/>
<rect x="335.0" y="507.0" width="6" height="7.0" fill="#009a00"/>
<rect x="364.0" y="507.0" width="6" height="7.0" fill="#009a00"/>
<rect x="393.0" y="507.0" width="6" height="7.0" fill="#009a00"/>
<rect x="421.0" y="509.0" width="6" height="5.0" fill="#009a00"/>
<rect x="450.0" y="509.0" width="6" height="5.0" fill="#009a00"/>
<rect x="478.0" y="503.0" width="6" height="11.0" fill="#009a00"/>
<rect x="507.0" y="497.0" width="6" height="17.0" fill="#009a00"/>
<rect x="535.0" y="495.0" width="6" height="19.0" fill="#009a00"/>
<rect x="564.0" y="494.0" width="6" height="20.0" fill="#009a00"/>
<rect x="593.0" y="493.0" width="6" height="21.0" fill="#009a00"/>
<rect x="621.0" y="494.0" width="6" height="20.0" fill="#009a00"/>
<rect x="650.0" y="498.0" width="6" height="16.0" fill="#009a00"/>
<rect x="678.0" y="503.0" width="6" height="11.0" fill="#009a00"/>
<rect x="707.0" y="504.0" width="6" height="10.0" fill="#009a00"/>
<rect x="735.0" y="506.0" width="6" height="8.0" fill="#009a00"/>
<rect x="764.0" y="510.0" width="6" height="4.0" fill="#009a00"/>
<rect x="793.0" y="513.0" width="6" height="1.0" fill="#009a00"/>
<rect x="821.0" y="514.0" width="6" height="4.0" fill="#009a00"/>
<rect x="850.0" y="514.0" width="6" height="6.0" fill="#009a00"/>
<rect x="878.0" y="514.0" width="6" height="8.0" fill="#009a00"/>
<rect x="907.0" y="514.0" width="6" height="7.0" fill="#009a00"/>
<rect x="935.0" y="514.0" width="6" height="10.0" fill="#009a00"/>
<rect x="964.0" y="514.0" width="6" height="12.0" fill="#009a00"/>
<rect x="993.0" y="514.0" width="6" height="12.0" fill="#009a00"/>
<rect x="1021.0" y="514.0" width="6" height="11.0" fill="#009a00"/>
<rect x="1050.0" y="514.0" width="6" height="11.0" fill="#009a00"/>
<rect x="1078.0" y="514.0" width="6" height="11.0" fill="#009a00"/>
<rect x="1107.0" y="514.0" width="6" height="11.0" fill="#009a00"/>
<rect x="1135.0" y="514.0" width="6" height="11.0" fill="#009a00"/>
<rect x="1164.0" y="514.0" width="6" height="7.0" fill="#009a00"/>
<line x1="166" y1="514.5" x2="1166.5" y2="514.5" stroke="#000"/>
<polyline points="166.5,540.6 195.1,540.0 223.6,539.2 252.2,538.4 280.8,537.6 309.4,536.2 337.9,534.8 366.5,532.3 395.1,531.1 423.6,529.9 452.2,527.8 480.8,525.6 509.3,522.0 537.9,515.7 566.5,511.5 595.0,507.2 623.6,502.8 652.2,498.4 680.8,495.7 709.3,493.0 737.9,491.3 766.5,489.6 795.0,489.0 823.6,489.6 852.2,491.7 880.8,494.4 909.3,497.0 937.9,499.7 966.5,502.4 995.0,505.4 1023.6,508.4 1052.2,511.4 1080.7,514.4 1109.3,516.2 1137.9,519.0 1166.5,521.9" fill="none" stroke="#f3a812" stroke-width="1.15" stroke-linejoin="miter" />
<polyline points="166.5,539.8 195.1,538.5 223.6,537.1 252.2,535.1 280.8,533.1 309.4,530.7 337.9,528.3 366.5,525.6 395.1,524.3 423.6,525.6 452.2,524.3 480.8,515.2 509.3,504.5 537.9,498.4 566.5,492.5 595.0,486.4 623.6,482.4 652.2,482.4 680.8,484.2 709.3,483.2 737.9,483.2 766.5,486.4 795.0,488.5 823.6,493.8 852.2,499.2 880.8,502.4 909.3,504.5 937.9,509.9 966.5,514.4 995.0,519.8 1023.6,519.8 1052.2,522.4 1080.7,525.1 1109.3,527.2 1137.9,529.9 1166.5,528.6" fill="none" stroke="#0000cc" stroke-width="2.6" stroke-linejoin="miter" />
<polygon points="819.8,483.0 827.2,483.0 823.5,490.5" fill="#f00"/>
<line x1="823.5" y1="485" x2="823.5" y2="493" stroke="#f00"/>
<rect x="164.0" y="611.0" width="6" height="3.0" fill="#0000c8"/>
<rect x="193.0" y="611.0" width="6" height="3.0" fill="#0000c8"/>
<rect x="221.0" y="609.0" width="6" height="5.0" fill="#0000c8"/>
<rect x="250.0" y="601.0" width="6" height="13.0" fill="#0000c8"/>
<rect x="278.0" y="601.0" width="6" height="13.0" fill="#0000c8"/>
<rect x="307.0" y="607.0" width="6" height="7.0" fill="#0000c8"/>
<rect x="335.0" y="607.0" width="6" height="7.0" fill="#0000c8"/>
<rect x="364.0" y="607.0" width="6" height="7.0" fill="#0000c8"/>
<rect x="393.0" y="608.0" width="6" height="6.0" fill="#0000c8"/>
<rect x="421.0" y="607.0" width="6" height="7.0" fill="#0000c8"/>
<rect x="450.0" y="595.0" width="6" height="19.0" fill="#0000c8"/>
<rect x="478.0" y="584.0" width="6" height="30.0" fill="#0000c8"/>
<rect x="507.0" y="567.0" width="6" height="47.0" fill="#0000c8"/>
<rect x="535.0" y="556.0" width="6" height="58.0" fill="#0000c8"/>
<rect x="564.0" y="607.0" width="6" height="7.0" fill="#0000c8"/>
<rect x="593.0" y="601.0" width="6" height="13.0" fill="#0000c8"/>
<rect x="621.0" y="588.0" width="6" height="26.0" fill="#0000c8"/>
<rect x="650.0" y="611.0" width="6" height="3.0" fill="#0000c8"/>
<rect x="678.0" y="609.0" width="6" height="5.0" fill="#0000c8"/>
<rect x="707.0" y="584.0" width="6" height="30.0" fill="#0000c8"/>
<rect x="735.0" y="612.0" width="6" height="2.0" fill="#0000c8"/>
<rect x="764.0" y="591.0" width="6" height="23.0" fill="#0000c8"/>
<rect x="793.0" y="595.0" width="6" height="19.0" fill="#0000c8"/>
<rect x="821.0" y="607.0" width="6" height="7.0" fill="#0000c8"/>
<rect x="850.0" y="609.0" width="6" height="5.0" fill="#0000c8"/>
<rect x="878.0" y="606.0" width="6" height="8.0" fill="#0000c8"/>
<rect x="907.0" y="574.0" width="6" height="40.0" fill="#0000c8"/>
<rect x="935.0" y="588.0" width="6" height="26.0" fill="#0000c8"/>
<rect x="964.0" y="607.0" width="6" height="7.0" fill="#0000c8"/>
<rect x="993.0" y="603.0" width="6" height="11.0" fill="#0000c8"/>
<rect x="1021.0" y="606.0" width="6" height="8.0" fill="#0000c8"/>
<rect x="1050.0" y="594.0" width="6" height="20.0" fill="#0000c8"/>
<rect x="1078.0" y="606.0" width="6" height="8.0" fill="#0000c8"/>
<rect x="1107.0" y="603.0" width="6" height="11.0" fill="#0000c8"/>
<rect x="1135.0" y="610.0" width="6" height="4.0" fill="#0000c8"/>
<rect x="1164.0" y="599.0" width="6" height="15.0" fill="#0000c8"/>
<polyline points="166.5,607.3 195.1,608.0 223.6,608.6 252.2,607.4 280.8,606.2 309.4,606.2 337.9,606.2 366.5,606.2 395.1,607.6 423.6,607.3 452.2,604.9 480.8,600.9 509.3,596.1 537.9,588.6 566.5,591.5 595.0,593.4 623.6,592.6 652.2,595.6 680.8,598.2 709.3,595.6 737.9,598.2 766.5,597.4 795.0,597.4 823.6,599.0 852.2,600.9 880.8,602.2 909.3,597.4 937.9,595.3 966.5,597.4 995.0,598.8 1023.6,600.6 1052.2,599.3 1080.7,600.6 1109.3,600.6 1137.9,601.9 1166.5,600.1" fill="none" stroke="#f3a812" stroke-width="1.15" stroke-linejoin="miter" />
<polyline points="166.5,668.9 195.1,671.3 223.6,673.0 252.2,674.8 280.8,674.8 309.4,676.9 337.9,680.6 366.5,672.4 395.1,675.6 423.6,668.1 452.2,671.3 480.8,678.8 509.3,683.3 537.9,681.4 566.5,685.5 595.0,686.3 623.6,688.7 652.2,687.3 680.8,684.1 709.3,686.3 737.9,687.6 766.5,678.8 795.0,668.9 823.6,671.3 852.2,672.9 880.8,674.2 909.3,674.0 937.9,667.3 966.5,665.4 995.0,664.1 1023.6,668.1 1052.2,671.3 1080.7,671.3 1109.3,671.3 1137.9,669.3 1166.5,673.4" fill="none" stroke="#f3a812" stroke-width="1.15" stroke-linejoin="miter" />
<polyline points="166.5,665.4 195.1,666.6 223.6,667.8 252.2,669.0 280.8,670.2 309.4,666.2 337.9,658.2 366.5,663.3 395.1,660.1 423.6,664.6 452.2,667.6 480.8,644.9 509.3,630.2 537.9,642.2 566.5,648.1 595.0,653.4 623.6,657.4 652.2,660.6 680.8,664.6 709.3,667.3 737.9,668.1 766.5,670.2 795.0,675.6 823.6,678.2 852.2,680.1 880.8,680.1 909.3,673.4 937.9,676.9 966.5,678.2 995.0,679.3 1023.6,668.1 1052.2,671.3 1080.7,672.9 1109.3,674.8 1137.9,675.2 1166.5,665.1" fill="none" stroke="#10a010" stroke-width="1.15" stroke-linejoin="miter" />
<polyline points="166.5,681.4 195.1,682.4 223.6,683.4 252.2,684.5 280.8,685.5 309.4,684.9 337.9,683.6 366.5,683.6 395.1,683.6 423.6,684.9 452.2,686.3 480.8,682.5 509.3,679.3 537.9,676.4 566.5,673.4 595.0,671.6 623.6,668.1 652.2,666.2 680.8,666.2 709.3,664.9 737.9,664.9 766.5,666.2 795.0,668.1 823.6,670.8 852.2,671.6 880.8,672.6 909.3,675.3 937.9,675.6 966.5,676.1 995.0,676.1 1023.6,678.2 1052.2,680.6 1080.7,682.8 1109.3,683.6 1137.9,684.3 1166.5,685.0" fill="none" stroke="#0000cc" stroke-width="2.7" stroke-linejoin="miter" />
<line x1="795.5" y1="632" x2="795.5" y2="668.9" stroke="#f00"/>
<polygon points="791.8,631.0 799.2,631.0 795.5,638.0" fill="#f00"/>
<line x1="937.5" y1="632" x2="937.5" y2="675.6" stroke="#f00"/>
<polygon points="933.8,631.0 941.2,631.0 937.5,638.0" fill="#f00"/>
<line x1="1052.5" y1="632" x2="1052.5" y2="680.3" stroke="#f00"/>
<polygon points="1048.8,631.0 1056.2,631.0 1052.5,638.0" fill="#f00"/>
<line x1="909.5" y1="673.4" x2="909.5" y2="689" stroke="#0c0"/>
<polygon points="905.8,689.0 913.2,689.0 909.5,680.0" fill="#00c800"/>
<line x1="1023.5" y1="668.1" x2="1023.5" y2="689" stroke="#0c0"/>
<polygon points="1019.8,689.0 1027.2,689.0 1023.5,680.0" fill="#00c800"/>
<line x1="1166.5" y1="681.0" x2="1166.5" y2="689" stroke="#0c0"/>
<polygon points="1162.8,689.0 1170.2,689.0 1166.5,680.0" fill="#00c800"/>
<rect x="145.5" y="127.0" width="155.1" height="12.6" fill="#fdf1c3" stroke="#3f6fd6"/>
<text x="149.5" y="135.0" class="lb" textLength="148.0" lengthAdjust="spacingAndGlyphs">VAPORES [Price: 22,50] (+3,1%)</text>
<rect x="145.5" y="395.5" width="157.5" height="13.2" fill="#fdf1c3" stroke="#3f6fd6"/>
<text x="148.3" y="404.8" class="lb" textLength="151.5" lengthAdjust="spacingAndGlyphs">STS – Stochastic (15,3,5) [13,23]</text>
<rect x="145.5" y="469.5" width="263.5" height="12.9" fill="#fdf1c3" stroke="#3f6fd6"/>
<text x="149.0" y="478.2" class="lb" textLength="256.5" lengthAdjust="spacingAndGlyphs">MACD – Moving Average Conv. Div. (12,26,9) [−0,244]</text>
<rect x="145.5" y="543.5" width="228.2" height="13.3" fill="#fdf1c3" stroke="#3f6fd6"/>
<text x="149.0" y="552.6" class="lb" textLength="220.5" lengthAdjust="spacingAndGlyphs">VOLEMA – Volume with EMA (10) [10.334.810]</text>
<rect x="145.5" y="617.5" width="246.1" height="12.7" fill="#fdf1c3" stroke="#3f6fd6"/>
<text x="149.0" y="626.4" class="lb" textLength="238.5" lengthAdjust="spacingAndGlyphs">DMI – Directional Movement Index (14,14) [14,25]</text>
<rect x="145.5" y="110.5" width="218" height="14" fill="#fff" stroke="#3f6fd6"/>
<line x1="148.3" y1="117.5" x2="159.8" y2="117.5" stroke="#3c6cf0" stroke-width="1"/>
<text x="160.5" y="120.6" class="lg" fill="#3c6cf0" textLength="31" lengthAdjust="spacingAndGlyphs">SMA3</text>
<line x1="197.3" y1="117.5" x2="208.8" y2="117.5" stroke="#f030f0" stroke-width="1"/>
<text x="209.5" y="120.6" class="lg" fill="#f030f0" textLength="31" lengthAdjust="spacingAndGlyphs">SMA2</text>
<line x1="246.3" y1="117.5" x2="257.8" y2="117.5" stroke="#000" stroke-width="1"/>
<text x="258.5" y="120.6" class="lg" fill="#000" textLength="31" lengthAdjust="spacingAndGlyphs">SMA1</text>
<line x1="295.3" y1="117.5" x2="306.8" y2="117.5" stroke="#007a00" stroke-width="3"/>
<text x="308.5" y="120.6" class="lg" fill="#007a00" textLength="52" lengthAdjust="spacingAndGlyphs">VAPORES</text>
<rect x="1257.5" y="396.5" width="13" height="13" rx="1.5" fill="#c8c8c8" stroke="#222"/>
<path d="M1260.5 399.5 L1267.5 406.5 M1267.5 399.5 L1260.5 406.5" stroke="#111" stroke-width="1.2"/>
<rect x="1257.5" y="471.0" width="13" height="13" rx="1.5" fill="#c8c8c8" stroke="#222"/>
<path d="M1260.5 474.0 L1267.5 481.0 M1267.5 474.0 L1260.5 481.0" stroke="#111" stroke-width="1.2"/>
<rect x="1257.5" y="544.5" width="13" height="13" rx="1.5" fill="#c8c8c8" stroke="#222"/>
<path d="M1260.5 547.5 L1267.5 554.5 M1267.5 547.5 L1260.5 554.5" stroke="#111" stroke-width="1.2"/>
<rect x="1257.5" y="618.5" width="13" height="13" rx="1.5" fill="#c8c8c8" stroke="#222"/>
<path d="M1260.5 621.5 L1267.5 628.5 M1267.5 621.5 L1260.5 628.5" stroke="#111" stroke-width="1.2"/>
</svg>
</body></html>
